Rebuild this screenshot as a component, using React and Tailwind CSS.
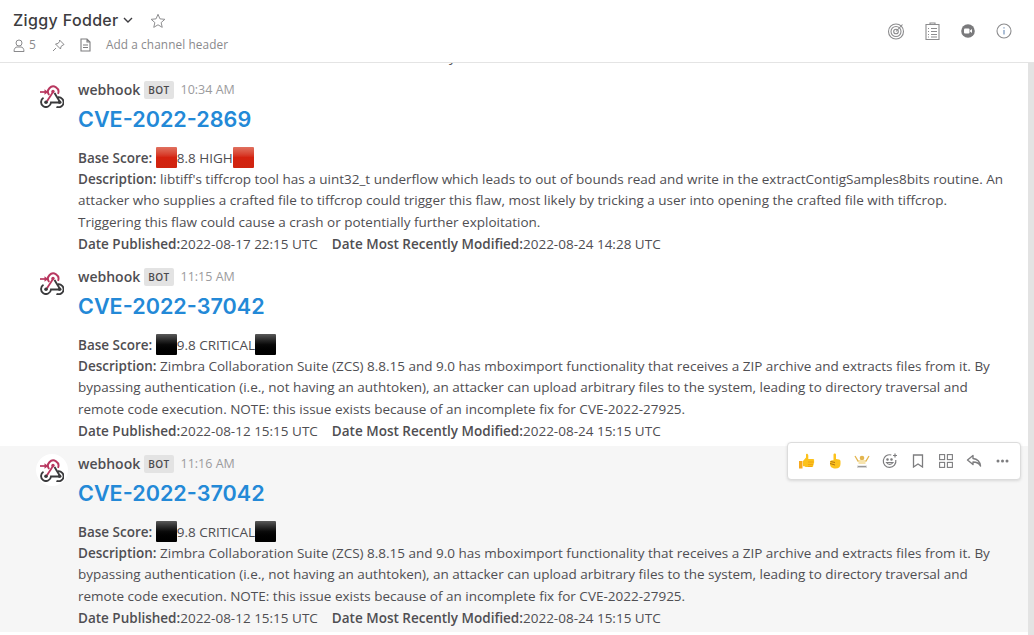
import React from "react";

const os = "font-['Open_Sans',sans-serif]";

function Hook() {
  return (
    <svg width="25" height="23" viewBox="0 0 25 23" fill="none">
      <path d="M1 7h5" stroke="#b8375f" strokeWidth="1.700" />
      <path d="M5.500 4.300l3.700 2.700-3.700 2.700z" fill="#b8375f" />
      <path d="M10.200 10a5.200 5.200 0 1 1 8.800-1.200" stroke="#b8375f" strokeWidth="1.900" />
      <circle cx="14" cy="6.500" r="1.700" fill="#b8375f" />
      <path d="M14 7l-6.500 10" stroke="#b8375f" strokeWidth="1.800" />
      <path d="M4.500 12.700a5 5 0 1 0 7.500 4.800h8" stroke="#3a3a3c" strokeWidth="1.900" />
      <circle cx="7" cy="17.300" r="1.800" fill="#3a3a3c" />
      <path d="M15.500 8l5.500 9" stroke="#3a3a3c" strokeWidth="1.900" />
      <path d="M19 12.300a5 5 0 1 1-1.500 9.500" stroke="#3a3a3c" strokeWidth="1.900" />
      <circle cx="20.700" cy="17.300" r="1.800" fill="#3a3a3c" />
    </svg>
  );
}

function Square({ color }) {
  const cls =
    color === "red"
      ? "bg-gradient-to-b from-[#e0705f] via-[#d4220f] to-[#cf2410]"
      : "bg-gradient-to-b from-[#5a5a5a] via-[#0a0a0a] to-[#000000]";
  return <span className={`inline-block w-[21px] h-[21px] align-[-5px] rounded-[1px] ${cls}`} />;
}

function Message({ time, title, color, score, desc, pub, mod, hovered }) {
  return (
    <div className={`flex pt-[8px] ${hovered ? "h-[186px] bg-[#f6f6f6]" : "h-[187px]"}`}>
      <div className="w-[78px] shrink-0 flex justify-end pr-[10px]">
        <div className={`w-8 h-8 pr-[2px] rounded-full flex items-center justify-center ${hovered ? "bg-white" : ""}`}>
          <Hook />
        </div>
      </div>
      <div className="flex-1 min-w-0 pr-[16px]">
        <div className="flex items-center h-[18px] mt-[1px]">
          <span className="text-[14px] font-semibold leading-[16px] text-[#4f4e52]">webhook</span>
          <span className="ml-[4px] bg-[#e3e3e3] rounded-[2px] text-[10px] font-semibold tracking-[0.4px] text-[#4a4a4d] px-[4px] h-[18px] leading-[18px]">BOT</span>
          <span className="ml-[7px] text-[12.500px] text-[#9b9b9d]">{time}</span>
        </div>
        <div className="mt-[6px] h-[28px] text-[21.600px] leading-[28px] font-semibold text-[#2389d7] font-['Inter',sans-serif]">{title}</div>
        <div className="mt-[14px] text-[13.500px] leading-[21.600px] text-[#4f4e52]">
          <div className="h-[21.600px]"><b className="font-semibold">Base Score: </b><Square color={color} />{score}<Square color={color} /></div>
          <div><b className="font-semibold">Description:</b> {desc}</div>
          <div className="pt-[0.500px]"><b className="font-semibold">Date Published:</b>{pub}<span className="inline-block w-[14px]" /><b className="font-semibold">Date Most Recently Modified:</b>{mod}</div>
        </div>
      </div>
    </div>
  );
}

const zimbra = "Zimbra Collaboration Suite (ZCS) 8.8.15 and 9.0 has mboximport functionality that receives a ZIP archive and extracts files from it. By bypassing authentication (i.e., not having an authtoken), an attacker can upload arbitrary files to the system, leading to directory traversal and remote code execution. NOTE: this issue exists because of an incomplete fix for CVE-2022-27925.";

function Slot({ children }) {
  return <span className="w-[28px] h-[28px] flex items-center justify-center">{children}</span>;
}

export default function App() {
  return (
    <div className={`w-[1034px] h-[635px] bg-white overflow-hidden flex flex-col ${os}`}>
      <header className="h-[63px] shrink-0 border-b border-[#e4e4e4] flex justify-between">
        <div className="pl-[13px] pt-[10px]">
          <div className="flex items-center h-[20px] text-[#3d3c40]">
            <span className="text-[16px] tracking-[0.35px] font-medium font-['Inter',sans-serif]">Ziggy Fodder</span>
            <svg className="ml-[4px] mt-[1px]" width="10" height="7" viewBox="0 0 10 7" fill="none"><path d="M1 1l4 4 4-4" stroke="#3d3c40" strokeWidth="1.400" /></svg>
            <svg className="ml-[17px]" width="16" height="15" viewBox="0 0 24 23" fill="none"><path d="M12 2l3 7 7.500.7-5.700 5 1.700 7.300-6.500-3.900-6.500 3.900 1.700-7.300-5.700-5 7.500-.7z" stroke="#8b8b8d" strokeWidth="1.500" strokeLinejoin="round" /></svg>
          </div>
          <div className="flex items-center h-[16px] mt-[7px] text-[12px] text-[#8a8a8c]">
            <svg width="12" height="13" viewBox="0 0 12 13" fill="none" stroke="#8a8a8c" strokeWidth="1"><circle cx="6" cy="4" r="3" /><path d="M1 12.500c0-3 1.500-4.500 3-4.500h4c1.500 0 3 1.500 3 4.500z" /></svg>
            <span className="ml-[4px]">5</span>
            <svg className="ml-[16px]" width="13" height="13" viewBox="0 0 13 13" fill="none" stroke="#8a8a8c" strokeWidth="1"><path d="M7.500 1l4.500 4.500-1 .5-2 1.500-.5 2.500-5-5 2.500-.5 1.500-2zM4 9l-3 3" /></svg>
            <svg className="ml-[15px]" width="11" height="14" viewBox="0 0 11 14" fill="none" stroke="#7d7d7f" strokeWidth="1.100"><path d="M1 1h6l3 3v9H1zM7 1v3h3M3 7h5M3 9.500h5" /></svg>
            <span className="ml-[15px] text-[11.800px] tracking-[0.1px]">Add a channel header</span>
          </div>
        </div>
        <div className="flex items-center pr-[12px] h-[62px]">
          <span className="w-[36px] flex justify-center"><svg width="18" height="18" viewBox="0 0 18 18" fill="none" stroke="#8c8c8e" strokeWidth="1.100"><circle cx="9" cy="9.500" r="7.500" /><circle cx="9" cy="9.500" r="5" /><circle cx="9" cy="9.500" r="2.300" /><path d="M9 9.500l6.500-7" /></svg></span>
          <span className="w-[36px] flex justify-center"><svg width="15" height="18" viewBox="0 0 15 18" fill="none" stroke="#8c8c8e" strokeWidth="1.100"><path d="M1 2.500h13v15H1zM5 2.500V1h5v1.500" /><path d="M3 6.500h1M6 6.500h6M3 9.500h1M6 9.500h6M3 12.500h1M6 12.500h6M3 15h1M6 15h6" /></svg></span>
          <span className="w-[36px] flex justify-center"><svg width="14" height="14" viewBox="0 0 14 14"><circle cx="7" cy="7" r="6.800" fill="#7a7a7c" /><rect x="3" y="4.500" width="5.500" height="5" rx="1" fill="#fff" /><path d="M9 6.500l2-1.500v4l-2-1.500z" fill="#fff" /></svg></span>
          <span className="w-[36px] flex justify-center"><svg width="16" height="16" viewBox="0 0 16 16" fill="none" stroke="#8c8c8e" strokeWidth="1.100"><circle cx="8" cy="8" r="7" /><path d="M8 7v4.500M8 4.200v1.300" stroke="#7f9cc0" strokeWidth="1.300" /></svg></span>
        </div>
      </header>

      <div className="flex-1 min-h-0 flex">
        <main className="relative flex-1 min-w-0 text-[#4f4e52]">
          <div className="h-[9px] overflow-hidden pl-[449px]">
            <div className="-mt-[16px] h-[21px] text-[13.500px] leading-[21.600px]">y</div>
          </div>
          <Message
            time="10:34 AM"
            title="CVE-2022-2869"
            color="red"
            score="8.8 HIGH"
            desc="libtiff's tiffcrop tool has a uint32_t underflow which leads to out of bounds read and write in the extractContigSamples8bits routine. An attacker who supplies a crafted file to tiffcrop could trigger this flaw, most likely by tricking a user into opening the crafted file with tiffcrop. Triggering this flaw could cause a crash or potentially further exploitation."
            pub="2022-08-17 22:15 UTC"
            mod="2022-08-24 14:28 UTC"
          />
          <Message time="11:15 AM" title="CVE-2022-37042" color="black" score="9.8 CRITICAL" desc={zimbra} pub="2022-08-12 15:15 UTC" mod="2022-08-24 15:15 UTC" />
          <Message hovered time="11:16 AM" title="CVE-2022-37042" color="black" score="9.8 CRITICAL" desc={zimbra} pub="2022-08-12 15:15 UTC" mod="2022-08-24 15:15 UTC" />
          <div className="absolute right-[7px] top-[379px] w-[234px] h-[38px] bg-white border border-[#dcdcdc] rounded-[4px] shadow-[0_1px_3px_rgba(0,0,0,0.12)] flex items-center px-[4px]">
            <Slot>
              <svg width="17" height="17" viewBox="0 0 17 17"><path d="M1 8h3.500v7.500H1z" fill="#f7a81d" /><path d="M5 8l3-3.500V1.500c0-1 2.200-1 2.300 1V6H15c1.400 0 1.500 1.500.8 2 .6.500.6 1.700-.2 2 .5.700.3 1.600-.4 2 .3.800 0 1.900-1 1.900H8c-1.500 0-2-.4-3-.9z" fill="#fcc21b" /><path d="M10 9h5.500M10 11.500h5M10 13.500h4" stroke="#ec9a12" strokeWidth=".7" /></svg>
            </Slot>
            <Slot>
              <svg width="13" height="16" viewBox="0 0 13 16"><path d="M5.500 1.500c0-1.500 2.500-1.500 2.500 0V6l3 .5c1 .2 1.500 1 1.500 2v2.500c0 3-2 4.500-5 4.500s-5.500-1.500-5.500-4.500V9c0-1 1-1.700 2-1.700h1.500z" fill="#fcc21b" /><path d="M2 10.500l5 1.500M2.500 8.500l4.500 1" stroke="#a86a10" strokeWidth=".9" /></svg>
            </Slot>
            <Slot>
              <svg width="16" height="15" viewBox="0 0 16 15"><path d="M1 2l3 5h8l3-5" fill="none" stroke="#e3b54f" strokeWidth="1.300" /><circle cx="8" cy="4" r="2.300" fill="#e3b54f" /><rect x="4.500" y="6" width="7" height="4" fill="#f6e3ae" /><path d="M3 11.500h10v2.500H3z" fill="#d5d5d5" /><path d="M4 12.500h8" stroke="#888" strokeWidth=".8" /></svg>
            </Slot>
            <Slot>
              <svg width="16" height="16" viewBox="0 0 16 16" fill="none" stroke="#7d7d7f" strokeWidth="1.200"><path d="M13.800 7a6.300 6.300 0 1 1-4.500-5" /><circle cx="5.500" cy="6.500" r=".7" fill="#7d7d7f" /><circle cx="9.500" cy="6.500" r=".7" fill="#7d7d7f" /><path d="M4.500 9.500c1.500 2.500 5 2.500 6.500 0zM13 .5v4M11 2.500h4" /></svg>
            </Slot>
            <Slot>
              <svg width="12" height="14" viewBox="0 0 12 14" fill="none" stroke="#7d7d7f" strokeWidth="1.300"><path d="M1.500 1h9v12L6 10l-4.500 3z" /></svg>
            </Slot>
            <Slot>
              <svg width="14" height="14" viewBox="0 0 14 14" fill="none" stroke="#7d7d7f" strokeWidth="1.100"><rect x=".6" y=".6" width="5" height="5" /><rect x="8.400" y=".6" width="5" height="5" /><rect x=".6" y="8.400" width="5" height="5" /><rect x="8.400" y="8.400" width="5" height="5" /></svg>
            </Slot>
            <Slot>
              <svg width="16" height="14" viewBox="0 0 16 14" fill="none" stroke="#7d7d7f" strokeWidth="1.400"><path d="M7 1.500L1.500 6 7 10.500V8c3.500 0 6 1 7.500 4-.5-4-3-7-7.500-7.500z" strokeLinejoin="round" /></svg>
            </Slot>
            <Slot>
              <svg width="13" height="4" viewBox="0 0 13 4" fill="#7d7d7f"><circle cx="2" cy="2" r="1.500" /><circle cx="6.500" cy="2" r="1.500" /><circle cx="11" cy="2" r="1.500" /></svg>
            </Slot>
          </div>
        </main>
        <div className="w-[6px] shrink-0 bg-[#e3e3e3]" />
      </div>
    </div>
  );
}
